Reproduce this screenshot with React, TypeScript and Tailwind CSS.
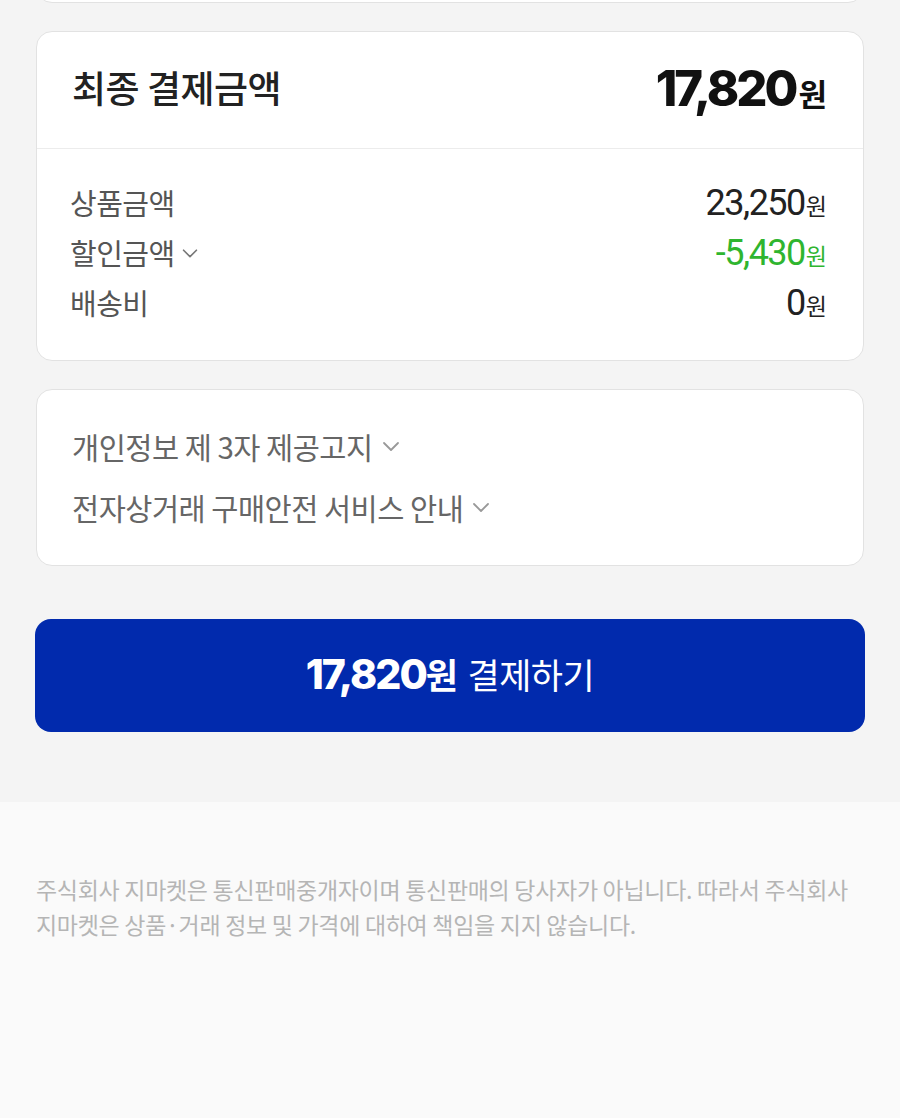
import React from "react";

const KR = { fontFamily: '"Noto Sans CJK KR", "Noto Sans", sans-serif' } as React.CSSProperties;

function Chevron({ className }: { className?: string }) {
  return (
    <svg viewBox="0 0 24 24" className={className} fill="none" stroke="currentColor" strokeWidth={1.8} strokeLinecap="round" strokeLinejoin="round">
      <path d="M5 9l7 7 7-7" />
    </svg>
  );
}

export default function App() {
  return (
    <div className="w-[900px] min-h-[1118px] bg-[#fafafa] font-['Noto_Sans_CJK_KR',sans-serif]">
      <div className="bg-[#f4f4f4] px-[35px] pb-[70px]">
        <div className="h-[4px] overflow-hidden px-[1px]">
          <div className="h-[40px] -mt-[37px] bg-white border border-[#e2e2e2] rounded-[16px]" />
        </div>

        <div className="mt-[27px] bg-white border border-[#e2e2e2] rounded-[16px] ml-[1px] mr-[1px]">
          <div className="h-[117px] flex items-center justify-between pl-[35px] pr-[36px] pb-[4px] border-b border-[#ececec]">
            <span className="text-[37px] text-[#222] font-medium tracking-[-0.5px]">최종 결제금액</span>
            <span className="flex items-baseline font-['Inter',sans-serif] font-extrabold text-[#111] tracking-[-3px]">
              <span className="text-[49px] leading-none">17,820</span>
              <span className="text-[31px] leading-none font-bold ml-[3px] tracking-normal" style={KR}>원</span>
            </span>
          </div>
          <div className="pt-[34px] pb-[37px] pl-[33px] pr-[36px] flex flex-col gap-[10px]">
            <div className="flex items-center justify-between h-[40px]">
              <span className="text-[29px] text-[#555] tracking-[-0.5px]">상품금액</span>
              <span className="flex items-baseline text-[#222]">
                <span className="text-[36px] font-['Roboto',sans-serif] tracking-[-1.5px]">23,250</span>
                <span className="text-[23px] ml-[1px]">원</span>
              </span>
            </div>
            <div className="flex items-center justify-between h-[40px]">
              <span className="flex items-center text-[29px] text-[#555] tracking-[-0.5px]">
                할인금액
                <Chevron className="w-[22px] h-[22px] ml-[4px] text-[#777]" />
              </span>
              <span className="flex items-baseline text-[#2fb52f]">
                <span className="text-[36px] font-['Roboto',sans-serif] tracking-[-1.5px]">-5,430</span>
                <span className="text-[23px] ml-[1px]">원</span>
              </span>
            </div>
            <div className="flex items-center justify-between h-[40px]">
              <span className="text-[29px] text-[#555] tracking-[-0.5px]">배송비</span>
              <span className="flex items-baseline text-[#222]">
                <span className="text-[36px] font-['Roboto',sans-serif] tracking-[-1.5px]">0</span>
                <span className="text-[23px] ml-[1px]">원</span>
              </span>
            </div>
          </div>
        </div>

        <div className="mt-[28px] bg-white border border-[#e2e2e2] rounded-[16px] mx-[1px] pl-[35px] pt-[36px] pb-[38px] flex flex-col gap-[21px]">
          <div className="flex items-center h-[40px] text-[29.5px] text-[#666] tracking-[-0.5px]">
            개인정보 제 3자 제공고지
            <Chevron className="w-[24px] h-[24px] ml-[6px] text-[#999]" />
          </div>
          <div className="flex items-center h-[40px] text-[29.5px] text-[#666] tracking-[-0.5px]">
            전자상거래 구매안전 서비스 안내
            <Chevron className="w-[24px] h-[24px] ml-[6px] text-[#999]" />
          </div>
        </div>

        <div className="mt-[53px] h-[113px] bg-[#012aad] rounded-[16px] flex items-center justify-center text-white">
          <span className="flex items-baseline -mt-[2px]">
            <span className="font-['Inter',sans-serif] font-extrabold text-[41px] tracking-[-2px]">17,820</span>
            <span className="font-bold text-[35px] tracking-[-0.5px]">원</span>
            <span className="text-[35px] ml-[10px] tracking-[-0.5px]">결제하기</span>
          </span>
        </div>
      </div>

      <div className="px-[36px] pt-[70px] text-[23px] leading-[35px] text-[#b5b5b5] tracking-[-0.3px] whitespace-nowrap">
        주식회사 지마켓은 통신판매중개자이며 통신판매의 당사자가 아닙니다. 따라서 주식회사
        <br />
        지마켓은 상품·거래 정보 및 가격에 대하여 책임을 지지 않습니다.
      </div>
    </div>
  );
}
